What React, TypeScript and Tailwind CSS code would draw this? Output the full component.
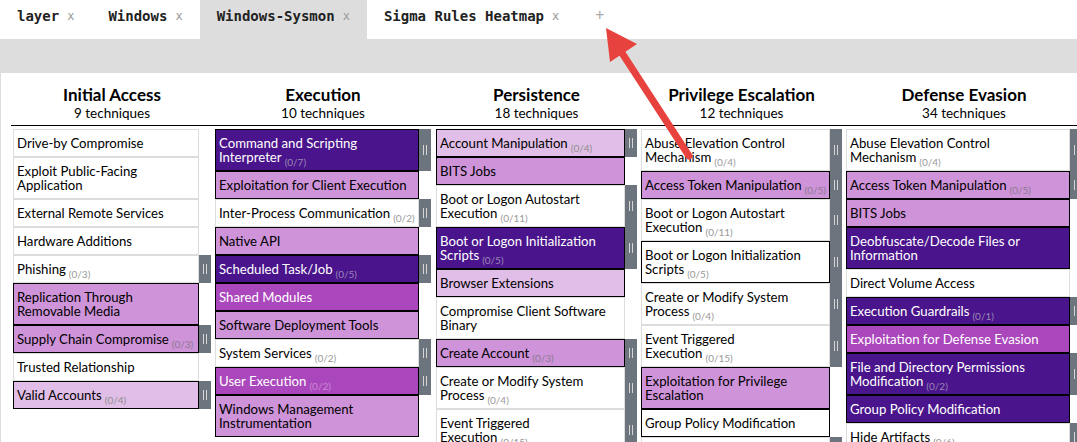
import React from "react";

type Bg = "w" | "d" | "m" | "l" | "x";
type Row = { t: string[]; c?: string; bg: Bg; bb?: boolean; h?: boolean };

const bgCls: Record<Bg, string> = {
  w: "bg-white text-black border-[#dddddd]",
  d: "bg-[#4a148c] text-white border-black",
  m: "bg-[#ab47bc] text-white border-black",
  l: "bg-[#ce93d8] text-black border-black",
  x: "bg-[#e1bee7] text-black border-black",
};
const cntCls: Record<Bg, string> = {
  w: "text-[#999999]",
  d: "text-[#9a88b4]",
  m: "text-[#c98ad4]",
  l: "text-[#8c7a90]",
  x: "text-[#8f8f8f]",
};

type Col = {
  name: string;
  count: string;
  cellW: string;
  colW: string;
  mr: string;
  rows: Row[];
};

const cols: Col[] = [
  {
    name: "Initial Access",
    count: "9 techniques",
    cellW: "w-[186px]",
    colW: "w-[198px]",
    mr: "mr-[4px]",
    rows: [
      { t: ["Drive-by Compromise"], bg: "w" },
      { t: ["Exploit Public-Facing", "Application"], bg: "w" },
      { t: ["External Remote Services"], bg: "w" },
      { t: ["Hardware Additions"], bg: "w" },
      { t: ["Phishing"], c: "(0/3)", bg: "w", h: true },
      { t: ["Replication Through", "Removable Media"], bg: "l" },
      { t: ["Supply Chain Compromise"], c: "(0/3)", bg: "l", h: true },
      { t: ["Trusted Relationship"], bg: "w" },
      { t: ["Valid Accounts"], c: "(0/4)", bg: "x", h: true },
    ],
  },
  {
    name: "Execution",
    count: "10 techniques",
    cellW: "w-[204px]",
    colW: "w-[216px]",
    mr: "mr-[5px]",
    rows: [
      { t: ["Command and Scripting", "Interpreter"], c: "(0/7)", bg: "d", h: true },
      { t: ["Exploitation for Client Execution"], bg: "l" },
      { t: ["Inter-Process Communication"], c: "(0/2)", bg: "w", h: true },
      { t: ["Native API"], bg: "l" },
      { t: ["Scheduled Task/Job"], c: "(0/5)", bg: "d", h: true },
      { t: ["Shared Modules"], bg: "m" },
      { t: ["Software Deployment Tools"], bg: "l" },
      { t: ["System Services"], c: "(0/2)", bg: "w", h: true },
      { t: ["User Execution"], c: "(0/2)", bg: "m", h: true },
      { t: ["Windows Management", "Instrumentation"], bg: "l" },
    ],
  },
  {
    name: "Persistence",
    count: "18 techniques",
    cellW: "w-[189px]",
    colW: "w-[201px]",
    mr: "mr-[4px]",
    rows: [
      { t: ["Account Manipulation"], c: "(0/4)", bg: "x", h: true },
      { t: ["BITS Jobs"], bg: "l" },
      { t: ["Boot or Logon Autostart", "Execution"], c: "(0/11)", bg: "w", h: true },
      { t: ["Boot or Logon Initialization", "Scripts"], c: "(0/5)", bg: "d", h: true },
      { t: ["Browser Extensions"], bg: "x" },
      { t: ["Compromise Client Software", "Binary"], bg: "w" },
      { t: ["Create Account"], c: "(0/3)", bg: "l", h: true },
      { t: ["Create or Modify System", "Process"], c: "(0/4)", bg: "w", h: true },
      { t: ["Event Triggered", "Execution"], c: "(0/15)", bg: "w", h: true },
    ],
  },
  {
    name: "Privilege Escalation",
    count: "12 techniques",
    cellW: "w-[189px]",
    colW: "w-[201px]",
    mr: "mr-[4px]",
    rows: [
      { t: ["Abuse Elevation Control", "Mechanism"], c: "(0/4)", bg: "w", h: true },
      { t: ["Access Token Manipulation"], c: "(0/5)", bg: "l", h: true },
      { t: ["Boot or Logon Autostart", "Execution"], c: "(0/11)", bg: "w", h: true },
      { t: ["Boot or Logon Initialization", "Scripts"], c: "(0/5)", bg: "w", bb: true, h: true },
      { t: ["Create or Modify System", "Process"], c: "(0/4)", bg: "w", h: true },
      { t: ["Event Triggered", "Execution"], c: "(0/15)", bg: "w", h: true },
      { t: ["Exploitation for Privilege", "Escalation"], bg: "l" },
      { t: ["Group Policy Modification"], bg: "w", bb: true },
      { t: ["Hijack Execution Flow"], c: "(0/12)", bg: "w", h: true },
    ],
  },
  {
    name: "Defense Evasion",
    count: "34 techniques",
    cellW: "w-[224px]",
    colW: "w-[236px]",
    mr: "mr-0",
    rows: [
      { t: ["Abuse Elevation Control", "Mechanism"], c: "(0/4)", bg: "w", h: true },
      { t: ["Access Token Manipulation"], c: "(0/5)", bg: "l", h: true },
      { t: ["BITS Jobs"], bg: "l" },
      { t: ["Deobfuscate/Decode Files or", "Information"], bg: "d" },
      { t: ["Direct Volume Access"], bg: "w" },
      { t: ["Execution Guardrails"], c: "(0/1)", bg: "d", h: true },
      { t: ["Exploitation for Defense Evasion"], bg: "m" },
      { t: ["File and Directory Permissions", "Modification"], c: "(0/2)", bg: "d", h: true },
      { t: ["Group Policy Modification"], bg: "d" },
      { t: ["Hide Artifacts"], c: "(0/6)", bg: "w", h: true },
    ],
  },
];

const tabs = [
  { name: "layer", active: false },
  { name: "Windows", active: false },
  { name: "Windows-Sysmon", active: true },
  { name: "Sigma Rules Heatmap", active: false },
];

function Handle() {
  return (
    <div className="w-[12px] shrink-0 bg-[#6c757d] flex items-center justify-center gap-[2px]">
      <div className="w-px h-[10px] bg-[#d6d6d6]" />
      <div className="w-px h-[10px] bg-[#d6d6d6]" />
    </div>
  );
}

function Cell({ r, cellW }: { r: Row; cellW: string }) {
  const border = r.bb ? "bg-white text-black border-black" : bgCls[r.bg];
  return (
    <div className="flex">
      <div
        className={`${cellW} shrink-0 border ${border} px-[3px] py-[6px] text-[13.2px] leading-[14px] whitespace-nowrap overflow-hidden`}
      >
        {r.t.map((line, i) => (
          <div key={i} className="h-[14px]">
            {line}
            {i === r.t.length - 1 && r.c ? (
              <span className={`relative top-[4px] ml-[3px] text-[10px] leading-[10px] ${cntCls[r.bg]}`}>{r.c}</span>
            ) : null}
          </div>
        ))}
      </div>
      {r.h ? <Handle /> : <div className="w-[12px] shrink-0" />}
    </div>
  );
}

export default function App() {
  return (
    <div className="relative w-[1077px] h-[442px] overflow-hidden bg-white font-['Lato','Noto_Sans',sans-serif]">
      {/* tabs */}
      <div className="flex h-[39px] bg-white font-['DejaVu_Sans_Mono',monospace] text-[14px]">
        {tabs.map((t) => (
          <div
            key={t.name}
            className={`flex items-start pt-[7px] pl-[17px] pr-[17px] h-full ${t.active ? "bg-[#dddddd]" : "bg-white"}`}
          >
            <span className="leading-[18px] font-bold text-[#222222]">{t.name}</span>
            <span className="ml-[8px] leading-[18px] text-[12px] text-[#9a9a9a]">x</span>
          </div>
        ))}
        <div className="flex items-start pt-[6px] pl-[19px]">
          <span className="leading-[18px] text-[15px] text-[#aaaaaa]">+</span>
        </div>
      </div>
      <div className="h-[34px] bg-[#dddddd]" />
      {/* matrix */}
      <div className="border-l border-[#dddddd] pl-[10px] h-[369px]">
        <div className="w-[1200px] border-b border-black pl-[2px] pt-[12px] pb-[4px] flex">
          {cols.map((c) => (
            <div key={c.name} className={`${c.colW} ${c.mr} shrink-0 text-center text-black`}>
              <div className="text-[17px] leading-[20px] font-bold">{c.name}</div>
              <div className="text-[13.5px] leading-[16px]">{c.count}</div>
            </div>
          ))}
        </div>
        <div className="flex items-start pl-[2px] mt-[3px]">
          {cols.map((c) => (
            <div key={c.name} className={`${c.colW} ${c.mr} shrink-0 flex flex-col`}>
              {c.rows.map((r, i) => (
                <Cell key={i} r={r} cellW={c.cellW} />
              ))}
            </div>
          ))}
        </div>
      </div>
      {/* annotation arrow */}
      <svg className="absolute left-0 top-0 pointer-events-none" width="1077" height="442" viewBox="0 0 1077 442">
        <line x1="689" y1="156" x2="622" y2="53" stroke="#e8423f" strokeWidth="7" strokeLinecap="round" />
        <polygon points="606,28 610,62 637,44" fill="#e8423f" />
      </svg>
    </div>
  );
}
